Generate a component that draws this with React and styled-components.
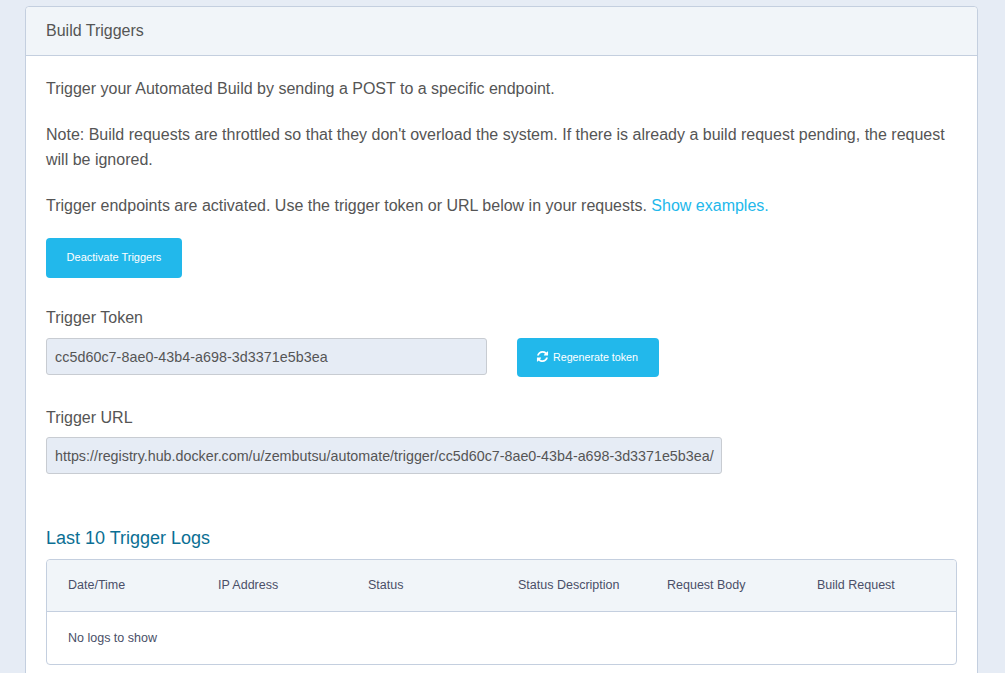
import React from "react";
import styled, { createGlobalStyle } from "styled-components";

const GlobalStyle = createGlobalStyle`
  html, body {
    margin: 0;
    padding: 0;
    height: 673px;
    overflow: hidden;
    background: #e6ecf5;
    font-family: "Liberation Sans", Arial, sans-serif;
    color: #555;
  }
  * {
    box-sizing: border-box;
  }
`;

const columns = [
  "Date/Time",
  "IP Address",
  "Status",
  "Status Description",
  "Request Body",
  "Build Request",
];

function RefreshIcon() {
  return (
    <svg width="13" height="13" viewBox="0 0 1792 1792" fill="currentColor">
      <path d="M1639 1056q0 5-1 7-64 268-268 434.5t-478 166.5q-146 0-282.5-55t-243.5-157l-129 129q-19 19-45 19t-45-19-19-45v-448q0-26 19-45t45-19h448q26 0 45 19t19 45-19 45l-137 137q71 66 161 102t187 36q134 0 250-65t186-179q11-17 53-117 8-23 30-23h192q13 0 22.5 9.5t9.5 22.5zm25-800v448q0 26-19 45t-45 19h-448q-26 0-45-19t-19-45 19-45l138-138q-148-137-349-137-134 0-250 65t-186 179q-11 17-53 117-8 23-30 23h-199q-13 0-22.5-9.5t-9.5-22.5v-7q65-268 270-434.5t480-166.5q146 0 284 55.5t245 156.5l130-129q19-19 45-19t45 19 19 45z" />
    </svg>
  );
}

export default function App() {
  return (
    <Page>
      <GlobalStyle />
      <Card>
        <CardHeader>Build Triggers</CardHeader>
        <CardBody>
          <Text>Trigger your Automated Build by sending a POST to a specific endpoint.</Text>
          <Text>
            Note: Build requests are throttled so that they don't overload the system. If there is
            already a build request pending, the request will be ignored.
          </Text>
          <Text>
            Trigger endpoints are activated. Use the trigger token or URL below in your requests.{" "}
            <Link href="#">Show examples.</Link>
          </Text>
          <Button $width={136} $height={40} $size={11} $trim={0}>Deactivate Triggers</Button>

          <Label $top={27} $bottom={8}>Trigger Token</Label>
          <TokenRow>
            <ReadOnly $width={441} $tracking={0.05}>cc5d60c7-8ae0-43b4-a698-3d3371e5b3ea</ReadOnly>
            <Button $width={142} $height={39} $size={10.7} $trim={2}>
              <RefreshIcon />
              Regenerate token
            </Button>
          </TokenRow>

          <Label $top={28} $bottom={7}>Trigger URL</Label>
          <ReadOnly $width={676} $tracking={0}>
            https://registry.hub.docker.com/u/zembutsu/automate/trigger/cc5d60c7-8ae0-43b4-a698-3d3371e5b3ea/
          </ReadOnly>

          <SectionTitle>Last 10 Trigger Logs</SectionTitle>
          <LogTable>
            <LogHead>
              {columns.map((c) => (
                <span key={c}>{c}</span>
              ))}
            </LogHead>
            <LogEmpty>No logs to show</LogEmpty>
          </LogTable>
        </CardBody>
      </Card>
    </Page>
  );
}

const Page = styled.div`
  padding: 6px 27px 0 25px;
`;
const Card = styled.section`
  background-color: #fff;
  border: 1px solid #c4cfdf;
  border-radius: 4px;
  width: 953px;
`;
const CardHeader = styled.header`
  height: 49px;
  padding: 0 20px;
  display: flex;
  align-items: center;
  font-size: 16px;
  background-color: #f1f5f9;
  border-bottom: 1px solid #c4cfdf;
  border-radius: 4px 4px 0 0;
`;
const CardBody = styled.div`
  padding: 20px 20px 40px;
`;
const Text = styled.p`
  margin: 0 0 21px;
  font-size: 16px;
  line-height: 25px;
  &:nth-of-type(3) {
    margin-bottom: 20px;
  }
`;
const Link = styled.a`
  color: #22b8eb;
  text-decoration: none;
`;
const Button = styled.button`
  display: flex;
  align-items: center;
  justify-content: center;
  gap: 4px;
  width: ${(props) => props.$width}px;
  height: ${(props) => props.$height}px;
  padding: 0 ${(props) => props.$trim}px 2px 0;
  border: 0;
  border-radius: 4px;
  background-color: #22b8eb;
  color: #fff;
  font-family: inherit;
  font-size: ${(props) => props.$size}px;
`;
const Label = styled.div`
  margin: ${(props) => props.$top}px 0 ${(props) => props.$bottom}px;
  font-size: 16px;
  line-height: 25px;
`;
const TokenRow = styled.div`
  display: flex;
  gap: 30px;
  align-items: flex-start;
`;
const ReadOnly = styled.div`
  width: ${(props) => props.$width}px;
  height: 37px;
  padding: 0 8px;
  display: flex;
  align-items: center;
  white-space: nowrap;
  overflow: hidden;
  font-size: 14.3px;
  letter-spacing: ${(props) => props.$tracking}px;
  background-color: #e6ecf5;
  border: 1px solid #c8ccd2;
  border-radius: 3px;
`;
const SectionTitle = styled.h3`
  margin: 52px 0 8px;
  font-size: 18px;
  line-height: 25px;
  font-weight: 400;
  color: #0b6f94;
`;
const LogTable = styled.div`
  border: 1px solid #c4cfdf;
  border-radius: 4px;
`;
const LogHead = styled.div`
  height: 52px;
  padding: 0 21px 2px;
  display: grid;
  grid-template-columns: 150px 150px 150px 149px 150px 1fr;
  align-items: center;
  font-size: 12.5px;
  color: #4a4f68;
  background-color: #f1f5f9;
  border-bottom: 1px solid #c4cfdf;
  border-radius: 4px 4px 0 0;
`;
const LogEmpty = styled.div`
  height: 52px;
  padding: 0 21px;
  display: flex;
  align-items: center;
  font-size: 12.5px;
  color: #4a4f68;
`;
